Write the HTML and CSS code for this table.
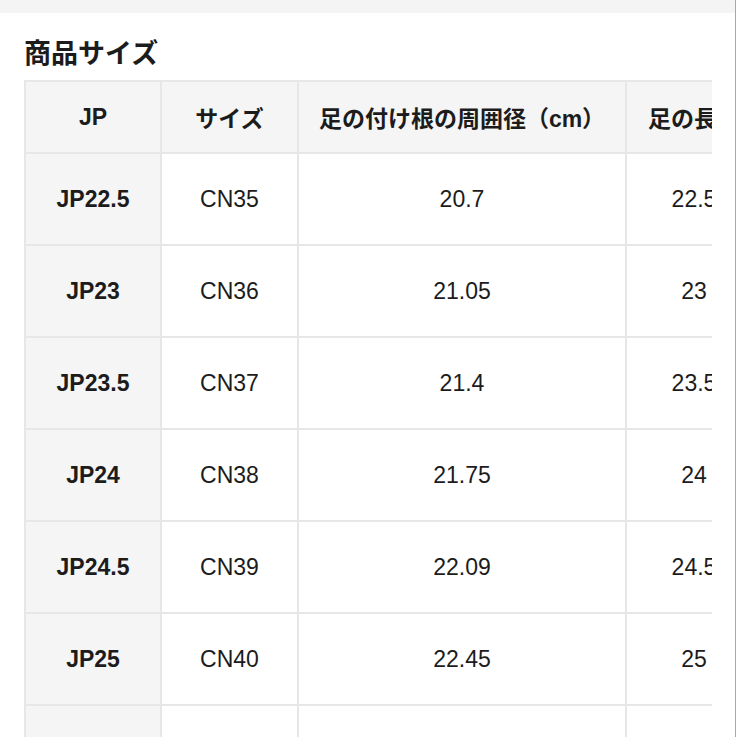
FILE: index.html
```html
<!DOCTYPE html>
<html lang="ja">
<head>
<meta charset="utf-8">
<title>商品サイズ</title>
<link rel="stylesheet" href="styles.css">
</head>
<body>
<div class="page">
  <div class="topbar"></div>
  <section class="section">
    <h2 class="title">商品サイズ</h2>
    <div class="table-wrap">
      <table class="size-table">
        <colgroup>
          <col class="col-a">
          <col class="col-b">
          <col class="col-c">
          <col class="col-d">
        </colgroup>
        <thead>
          <tr class="head-row">
            <th>JP</th>
            <th>サイズ</th>
            <th>足の付け根の周囲径（cm）</th>
            <th>足の長さ</th>
          </tr>
        </thead>
        <tbody>
          <tr class="body-row"><th>JP22.5</th><td>CN35</td><td>20.7</td><td>22.5</td></tr>
          <tr class="body-row"><th>JP23</th><td>CN36</td><td>21.05</td><td>23</td></tr>
          <tr class="body-row"><th>JP23.5</th><td>CN37</td><td>21.4</td><td>23.5</td></tr>
          <tr class="body-row"><th>JP24</th><td>CN38</td><td>21.75</td><td>24</td></tr>
          <tr class="body-row"><th>JP24.5</th><td>CN39</td><td>22.09</td><td>24.5</td></tr>
          <tr class="body-row"><th>JP25</th><td>CN40</td><td>22.45</td><td>25</td></tr>
          <tr class="body-row"><th>JP25.5</th><td>CN41</td><td>22.8</td><td>25.5</td></tr>
        </tbody>
      </table>
    </div>
  </section>
</div>
</body>
</html>
```

FILE: styles.css
```css
html, body {
  margin: 0;
  padding: 0;
  background: #ffffff;
}

body {
  font-family: "Liberation Sans", "Noto Sans CJK JP", Arial, sans-serif;
  color: #1c1c1c;
  overflow: hidden;
}

.page {
  width: 735px;
  height: 737px;
  border-right: 1px solid #a8a8a8;
  background: #ffffff;
  overflow: hidden;
}

.topbar {
  height: 13px;
  background: #f4f4f4;
}

.section {
  padding: 0 23px 0 24px;
}

.title {
  margin: 25px 0 14px;
  font-family: "Noto Sans CJK JP", sans-serif;
  font-size: 27px;
  line-height: 28px;
  font-weight: 700;
  color: #1c1c1c;
}

.table-wrap {
  width: 688px;
  overflow: hidden;
}

.size-table {
  border-collapse: collapse;
  table-layout: fixed;
  width: 737px;
}

.col-a { width: 136px; }
.col-b { width: 137px; }
.col-c { width: 328px; }
.col-d { width: 136px; }

.size-table th,
.size-table td {
  border: 2px solid #e7e7e7;
  padding: 0;
  text-align: center;
  vertical-align: middle;
  font-size: 23px;
  white-space: nowrap;
}

.head-row th {
  height: 70px;
  background: #f5f5f5;
  font-weight: 700;
}

.body-row th {
  background: #f5f5f5;
  font-weight: 700;
}

.body-row td {
  background: #ffffff;
  font-weight: 400;
}

.body-row th,
.body-row td {
  height: 90px;
}
```
